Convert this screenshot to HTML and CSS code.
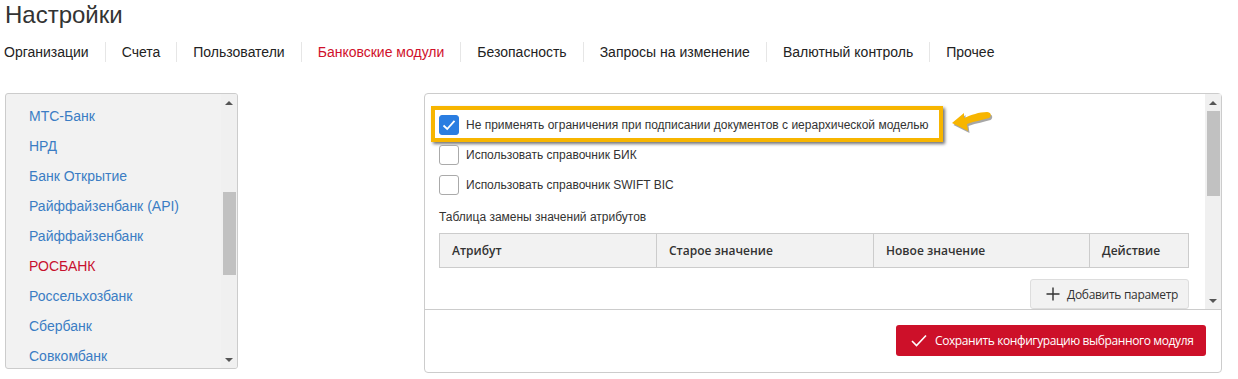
FILE: index.html
```html
<!DOCTYPE html>
<html lang="ru">
<head>
    <meta charset="UTF-8">
    <title>Настройки</title>
    <link rel="stylesheet" href="styles.css">
</head>
<body>
<div class="page">
    <h1 class="title">Настройки</h1>
    <ul class="tabs">
        <li>Организации</li>
        <li>Счета</li>
        <li>Пользователи</li>
        <li class="active">Банковские модули</li>
        <li>Безопасность</li>
        <li>Запросы на изменение</li>
        <li>Валютный контроль</li>
        <li>Прочее</li>
    </ul>

    <div class="main">
        <div class="banks">
            <ul class="bank-list">
                <li>МТС-Банк</li>
                <li>НРД</li>
                <li>Банк Открытие</li>
                <li>Райффайзенбанк (API)</li>
                <li>Райффайзенбанк</li>
                <li class="active">РОСБАНК</li>
                <li>Россельхозбанк</li>
                <li>Сбербанк</li>
                <li>Совкомбанк</li>
            </ul>
            <div class="sbar">
                <span class="sbar-up"></span>
                <div class="sbar-track"><div class="sbar-thumb thumb-left"></div></div>
                <span class="sbar-down"></span>
            </div>
        </div>

        <div class="config">
            <div class="config-body">
                <div class="config-content">
                    <div class="row row-marked">
                        <span class="box checked">
                            <svg width="14" height="12" viewBox="0 0 14 12"><path d="M1.5 6.5 L5.2 10 L12.5 1.8" fill="none" stroke="#fff" stroke-width="1.8"/></svg>
                        </span>
                        <span class="label">Не применять ограничения при подписании документов с иерархической моделью</span>
                        <span class="mark"></span>
                        <svg class="arrow" width="46" height="26" viewBox="0 0 46 26">
                            <path d="M4 14 L16 4 L16 9 C23 6 31 3 39 3 C43 3 44 7 41 9 C35 11 27 12 19 15 L20 22 Z" fill="#3a3a3a" opacity="0.45" transform="translate(1.5 2)"/>
                            <path d="M4 14 L16 4 L16 9 C23 6 31 3 39 3 C43 3 44 7 41 9 C35 11 27 12 19 15 L20 22 Z" fill="#f7b500"/>
                        </svg>
                    </div>
                    <div class="row">
                        <span class="box"></span>
                        <span class="label">Использовать справочник БИК</span>
                    </div>
                    <div class="row">
                        <span class="box"></span>
                        <span class="label">Использовать справочник SWIFT BIC</span>
                    </div>

                    <div class="caption">Таблица замены значений атрибутов</div>
                    <table class="attrs">
                        <tr>
                            <th class="c1">Атрибут</th>
                            <th class="c2">Старое значение</th>
                            <th class="c3">Новое значение</th>
                            <th>Действие</th>
                        </tr>
                    </table>
                    <div class="add-line">
                        <button class="btn-add">
                            <svg width="14" height="14" viewBox="0 0 14 14"><path d="M7 0.5 V13.5 M0.5 7 H13.5" stroke="#333" stroke-width="1.4"/></svg>
                            Добавить параметр
                        </button>
                    </div>
                </div>
                <div class="sbar">
                    <span class="sbar-up"></span>
                    <div class="sbar-track"><div class="sbar-thumb thumb-right"></div></div>
                    <span class="sbar-down"></span>
                </div>
            </div>
            <div class="config-foot">
                <button class="btn-save">
                    <svg width="16" height="13" viewBox="0 0 16 13"><path d="M1 7 L5.5 11.5 L15 1.5" fill="none" stroke="#fff" stroke-width="1.6"/></svg>
                    Сохранить конфигурацию выбранного модуля
                </button>
            </div>
        </div>
    </div>
</div>
</body>
</html>
```

FILE: styles.css
```css
* {margin: 0; padding: 0; box-sizing: border-box;}
li {list-style: none;}
body {background: #fff; color: #333; font-family: "Liberation Sans", Arial, sans-serif; overflow: hidden;}

.page {padding: 0 16px 0 4px;}
.title {font-size: 24px; font-weight: normal; line-height: 30px; padding-left: 1px; color: #333;}

.tabs {display: flex; margin-top: 12px; font-size: 14px; line-height: 20px; color: #222;}
.tabs li {padding: 0 16px; border-left: 1px solid #e6e6e6;}
.tabs li:first-child {padding-left: 0; border-left: none;}
.tabs li.active {color: #d0112b;}

.main {display: grid; grid-template-columns: 233px 1fr; column-gap: 186px; margin-top: 31px; padding-left: 1px;}

/* left bank list */
.banks {display: flex; height: 276px; background: #f2f2f2; border: 1px solid #ccc; border-radius: 3px; overflow: hidden;}
.bank-list {flex: 1; padding: 7px 0 0 23px; font-size: 14px; line-height: 30px; color: #3b7dc4;}
.bank-list li.active {color: #c8102e;}

/* fake scrollbars */
.sbar {display: flex; flex-direction: column; width: 16px; background: #f0f0f0;}
.sbar-up, .sbar-down {height: 17px; display: flex; align-items: center; justify-content: center;}
.sbar-up:after {content: ""; border: 4px solid transparent; border-bottom: 4px solid #555; border-top: none;}
.sbar-down:after {content: ""; border: 4px solid transparent; border-top: 4px solid #555; border-bottom: none;}
.sbar-track {flex: 1; padding: 0 1px 0 2px;}
.sbar-thumb {background: #c1c1c1;}
.thumb-left {margin-top: 81px; height: 83px;}
.thumb-right {margin-top: 0; height: 85px;}

/* right config panel */
.config {height: 280px; border: 1px solid #ccc; border-radius: 4px; display: flex; flex-direction: column;}
.config-body {display: flex; height: 216px; border-bottom: 1px solid #ccc;}
.config-content {flex: 1; padding: 16px 16px 0 14px; overflow: hidden;}

.row {position: relative; display: flex; align-items: center; height: 30px;}
.box {width: 20px; height: 20px; border: 1px solid #aaa; border-radius: 3px; background: #fff; display: flex; align-items: center; justify-content: center;}
.box.checked {background: #2a7de1; border-color: #2a7de1;}
.label {margin-left: 7px; font-size: 12px; color: #333;}

/* annotation over first option */
.mark {position: absolute; left: -8px; top: -4px; width: 512px; height: 36px; border: 4px solid #f7b500; box-shadow: 2px 2px 3px rgba(0,0,0,0.55);}
.arrow {position: absolute; left: 509px; top: -1px;}

.caption {margin-top: 8px; font-size: 12px; line-height: 18px; color: #333;}

.attrs {margin-top: 7px; width: 750px; border-collapse: collapse; font-family: "Open Sans", sans-serif; font-size: 12px;}
.attrs th {height: 34px; padding: 0 12px; text-align: left; font-weight: 600; background: #f2f2f2; border: 1px solid #ccc; color: #333;}
.attrs .c1, .attrs .c2 {width: 217px;}
.attrs .c3 {width: 216px;}

.add-line {display: flex; justify-content: flex-end; margin-top: 11px;}
.btn-add {display: flex; align-items: center; gap: 7px; height: 30px; width: 159px; padding: 0 0 0 15px; background: #f2f2f2; border: 1px solid #ddd; border-radius: 3px; font-family: "Open Sans", sans-serif; font-size: 12px; letter-spacing: -0.3px; white-space: nowrap; color: #333;}

.config-foot {display: flex; justify-content: flex-end; padding: 15px 15px 0 0;}
.btn-save {display: flex; align-items: center; gap: 8px; height: 31px; width: 310px; padding: 0 0 0 15px; background: #cd1029; border: none; border-radius: 3px; color: #fff; font-family: "Open Sans", sans-serif; font-size: 12px; letter-spacing: -0.4px; white-space: nowrap;}
```
